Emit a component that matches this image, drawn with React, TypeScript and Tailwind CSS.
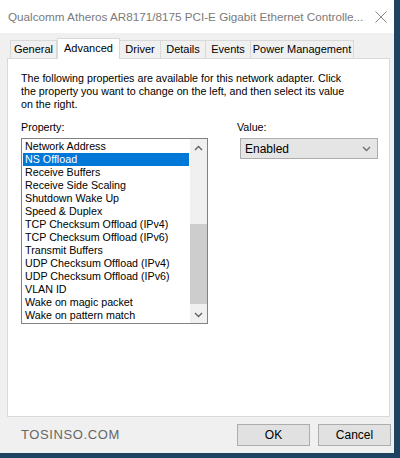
import clsx from "clsx";

const cn = clsx;

const TABS = [
  { label: "General", w: "w-[47px]" },
  { label: "Advanced", w: "w-[63px]", active: true },
  { label: "Driver", w: "w-[42px]" },
  { label: "Details", w: "w-[46px]" },
  { label: "Events", w: "w-[46px]" },
  { label: "Power Management", w: "w-[104px]" },
];

const PROPERTIES = [
  "Network Address",
  "NS Offload",
  "Receive Buffers",
  "Receive Side Scaling",
  "Shutdown Wake Up",
  "Speed & Duplex",
  "TCP Checksum Offload (IPv4)",
  "TCP Checksum Offload (IPv6)",
  "Transmit Buffers",
  "UDP Checksum Offload (IPv4)",
  "UDP Checksum Offload (IPv6)",
  "VLAN ID",
  "Wake on magic packet",
  "Wake on pattern match",
];

function Chevron({ up, className }: { up?: boolean; className?: string }) {
  return (
    <svg width="9" height="6" viewBox="0 0 9 6" className={className}>
      <path
        d={up ? "M1 5 L4.5 1.5 L8 5" : "M1 1 L4.5 4.5 L8 1"}
        fill="none"
        stroke="currentColor"
        strokeWidth="1.3"
      />
    </svg>
  );
}

export default function App() {
  return (
    <div
      className="flex h-[458px] w-[400px] flex-col border-r-[6px] border-b-[5px] border-[#1d4262] bg-[#f0f0f0] text-[10.7px] text-black"
      style={{ fontFamily: '"Liberation Sans", Arial, sans-serif' }}
    >
      {/* title bar */}
      <div className="flex h-[33px] items-center justify-between bg-white pl-[8px] pr-[6px]">
        <span className="whitespace-nowrap text-[11.7px] text-[#7a7a7a]">
          Qualcomm Atheros AR8171/8175 PCI-E Gigabit Ethernet Controlle...
        </span>
        <svg width="12" height="12" viewBox="0 0 12 12" className="mr-[1px] shrink-0 text-[#8a8a8a]">
          <path d="M0.5 0.5 L11.5 11.5 M11.5 0.5 L0.5 11.5" stroke="currentColor" strokeWidth="1" />
        </svg>
      </div>

      {/* tabs */}
      <div className="flex h-[25px] items-end pl-[10px]">
        {TABS.map((t) => (
          <div
            key={t.label}
            className={cn(
              "flex items-center justify-center border border-[#d9d9d9] text-[11px]",
              t.w,
              t.active
                ? "relative z-10 -mb-px h-[21px] border-b-0 bg-white pb-[2px]"
                : "-ml-px h-[18px] border-b-0 bg-[#f0f0f0] first:ml-0",
            )}
          >
            {t.label}
          </div>
        ))}
      </div>

      {/* panel */}
      <div className="ml-[7px] h-[359px] w-[383px] border border-[#d9d9d9] bg-white pl-[13px] pt-[13px]">
        <p className="leading-[13px]">
          The following properties are available for this network adapter. Click
          <br />
          the property you want to change on the left, and then select its value
          <br />
          on the right.
        </p>

        <div className="mt-[10px] flex">
          <div className="flex flex-col">
            <span className="leading-[13px]">Property:</span>
            <div className="mt-[4px] flex h-[186px] w-[187px] border border-[#828282] bg-white">
              <div className="flex flex-1 flex-col p-px">
                {PROPERTIES.map((p, i) => (
                  <div
                    key={p}
                    className={cn(
                      "h-[13px] whitespace-nowrap px-[2px] leading-[13px]",
                      i === 1 && "bg-[#0078d7] text-white",
                    )}
                  >
                    {p}
                  </div>
                ))}
              </div>
              <div className="flex w-[17px] flex-col bg-[#f0f0f0]">
                <div className="flex h-[17px] items-center justify-center text-[#606060]">
                  <Chevron up />
                </div>
                <div className="h-[68px]" />
                <div className="h-[80px] bg-[#cdcdcd]" />
                <div className="flex-1" />
                <div className="flex h-[17px] items-center justify-center text-[#606060]">
                  <Chevron />
                </div>
              </div>
            </div>
          </div>

          <div className="ml-[29px] flex flex-col">
            <span className="leading-[13px]">Value:</span>
            <div className="ml-[3px] mt-[4px] flex h-[21px] w-[138px] items-center justify-between border border-[#adadad] bg-[#e5e5e5] pl-[4px] pr-[6px] text-[12px]">
              <span>Enabled</span>
              <Chevron className="text-[#707070]" />
            </div>
          </div>
        </div>
      </div>

      {/* footer */}
      <div className="flex flex-1 items-center pl-[21px] pr-[3px]">
        <span className="text-[13px] tracking-[0.6px] text-[#666]">TOSINSO.COM</span>
        <div className="ml-auto flex gap-[8px]">
          <button className="h-[22px] w-[73px] border border-[#adadad] bg-[#e1e1e1] text-[12px]">OK</button>
          <button className="h-[22px] w-[73px] border border-[#adadad] bg-[#e1e1e1] text-[12px]">Cancel</button>
        </div>
      </div>
    </div>
  );
}
